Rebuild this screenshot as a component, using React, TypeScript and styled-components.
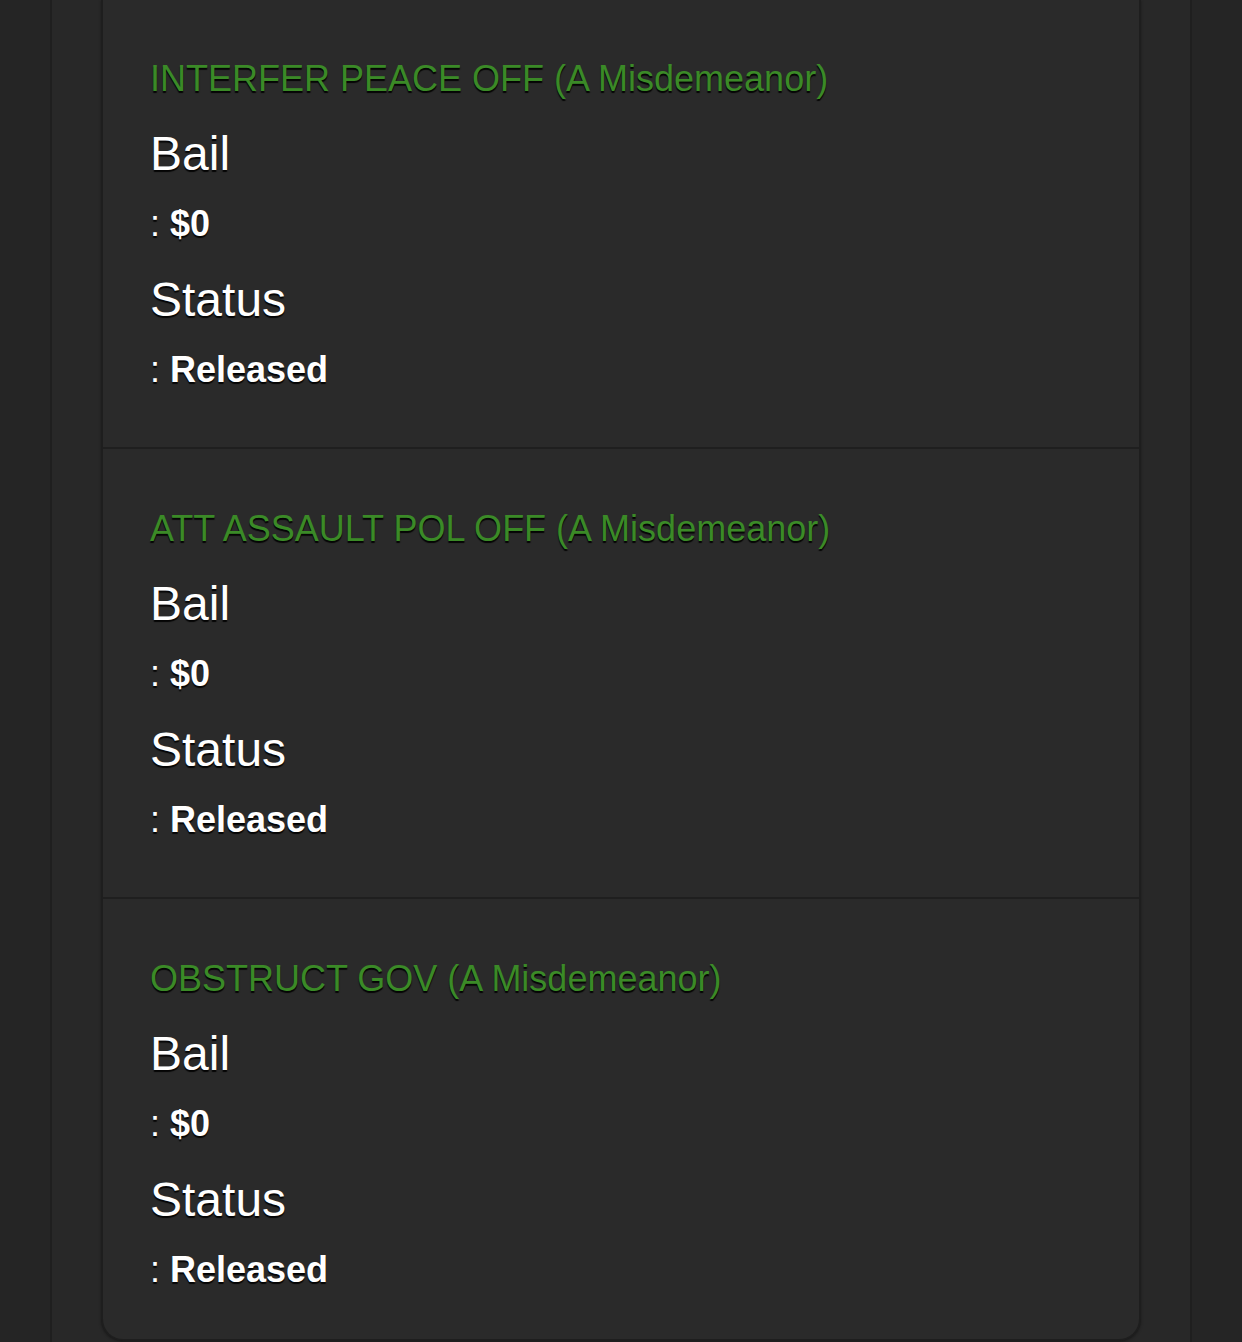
import React from "react";
import styled, { createGlobalStyle } from "styled-components";

const Global = createGlobalStyle`
  html, body { margin: 0; padding: 0; background: #252525; }
  body { font-family: "Liberation Sans", Arial, Helvetica, sans-serif; }
`;

const Column = styled.div`
  margin: 0 50px;
  min-height: 100vh;
  box-sizing: border-box;
  background: #282828;
  border-left: 2px solid #1f1f1f;
  border-right: 2px solid #1f1f1f;
  padding: 0 49px;
`;

const Card = styled.div`
  background: #2a2a2a;
  border: 2px solid #1e1e1e;
  border-top: none;
  border-radius: 0 0 22px 22px;
  box-shadow: 0 1px 3px rgba(0, 0, 0, 0.35);
`;

const Item = styled.div`
  padding: 60px 47px 58px;
  border-top: 2px solid #1f1f1f;
  &:first-child { border-top: none; padding-top: 59px; }
  &:last-child { padding-bottom: 50px; }
`;

const Title = styled.div`
  font-size: 36px;
  line-height: 40px;
  color: #3b8a27;
  text-shadow: 0 2px 1px rgba(0, 0, 0, 0.9);
`;

const Label = styled.div<{ $gap: number }>`
  font-size: 48px;
  line-height: 52px;
  color: #ffffff;
  margin-top: ${(p) => p.$gap}px;
  text-shadow: 0 2px 1px rgba(0, 0, 0, 0.9);
`;

const Value = styled.div`
  font-size: 36px;
  line-height: 38px;
  color: #ffffff;
  margin-top: 25px;
  text-shadow: 0 2px 1px rgba(0, 0, 0, 0.9);
  b { font-weight: 700; }
`;

const charges = [
  "INTERFER PEACE OFF (A Misdemeanor)",
  "ATT ASSAULT POL OFF (A Misdemeanor)",
  "OBSTRUCT GOV (A Misdemeanor)",
];

export default function App() {
  return (
    <>
      <Global />
      <Column>
        <Card>
          {charges.map((c) => (
            <Item key={c}>
              <Title>{c}</Title>
              <Label $gap={29}>Bail</Label>
              <Value>
                : <b>$0</b>
              </Value>
              <Label $gap={31}>Status</Label>
              <Value>
                : <b>Released</b>
              </Value>
            </Item>
          ))}
        </Card>
      </Column>
    </>
  );
}
